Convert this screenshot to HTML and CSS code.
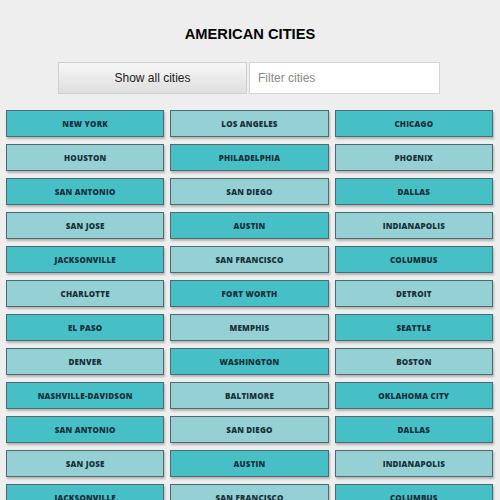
FILE: index.html
```html
<!DOCTYPE html>
<html>
<head>
<meta charset="utf-8">
<link rel="stylesheet" href="styles.css">
</head>
<body>
<div class="page">
  <h1 class="title">AMERICAN CITIES</h1>
  <div class="controls">
    <button class="show-all">Show all cities</button>
    <input class="filter" type="text" placeholder="Filter cities">
  </div>
  <ul class="cities">
    <li class="city dark">NEW YORK</li>
    <li class="city light">LOS ANGELES</li>
    <li class="city dark">CHICAGO</li>
    <li class="city light">HOUSTON</li>
    <li class="city dark">PHILADELPHIA</li>
    <li class="city light">PHOENIX</li>
    <li class="city dark">SAN ANTONIO</li>
    <li class="city light">SAN DIEGO</li>
    <li class="city dark">DALLAS</li>
    <li class="city light">SAN JOSE</li>
    <li class="city dark">AUSTIN</li>
    <li class="city light">INDIANAPOLIS</li>
    <li class="city dark">JACKSONVILLE</li>
    <li class="city light">SAN FRANCISCO</li>
    <li class="city dark">COLUMBUS</li>
    <li class="city light">CHARLOTTE</li>
    <li class="city dark">FORT WORTH</li>
    <li class="city light">DETROIT</li>
    <li class="city dark">EL PASO</li>
    <li class="city light">MEMPHIS</li>
    <li class="city dark">SEATTLE</li>
    <li class="city light">DENVER</li>
    <li class="city dark">WASHINGTON</li>
    <li class="city light">BOSTON</li>
    <li class="city dark">NASHVILLE-DAVIDSON</li>
    <li class="city light">BALTIMORE</li>
    <li class="city dark">OKLAHOMA CITY</li>
    <li class="city dark">SAN ANTONIO</li>
    <li class="city light">SAN DIEGO</li>
    <li class="city dark">DALLAS</li>
    <li class="city light">SAN JOSE</li>
    <li class="city dark">AUSTIN</li>
    <li class="city light">INDIANAPOLIS</li>
    <li class="city dark">JACKSONVILLE</li>
    <li class="city light">SAN FRANCISCO</li>
    <li class="city dark">COLUMBUS</li>
  </ul>
</div>
</body>
</html>
```
FILE: styles.css
```css
html, body {
  margin: 0;
  padding: 0;
  background: #eeeeee;
}

.page {
  font-family: "Liberation Sans", Arial, sans-serif;
}

.title {
  margin: 0;
  padding-top: 26px;
  font-size: 14.7px;
  line-height: 16px;
  font-weight: bold;
  text-align: center;
  color: #000;
}

.controls {
  display: flex;
  justify-content: center;
  margin-top: 20px;
  gap: 2px;
  padding-right: 2px;
}

.show-all {
  box-sizing: border-box;
  width: 189px;
  height: 32px;
  margin: 0;
  border: 1px solid #cfcfcf;
  background: linear-gradient(#f7f7f7, #dedede);
  font-family: "Liberation Sans", Arial, sans-serif;
  font-size: 12px;
  color: #222;
  padding: 0;
}

.filter {
  box-sizing: border-box;
  width: 191px;
  height: 32px;
  margin: 0;
  border: 1px solid #d6d6d6;
  background: #fff;
  padding: 0 8px;
  font-family: "Liberation Sans", Arial, sans-serif;
  font-size: 12px;
  outline: none;
}

.filter::placeholder {
  color: #8a8a8a;
}

.cities {
  list-style: none;
  margin: 16px 0 0;
  padding: 0 7px 0 6px;
  display: grid;
  grid-template-columns: repeat(3, 1fr);
  column-gap: 6px;
  row-gap: 7px;
}

.city {
  box-sizing: border-box;
  height: 27px;
  border: 1px solid #4d6a6e;
  box-shadow: 1px 2px 2px rgba(0, 0, 0, 0.25);
  display: flex;
  align-items: center;
  justify-content: center;
  font-family: "Open Sans", sans-serif;
  font-weight: 800;
  font-size: 8px;
  letter-spacing: 0.2px;
  color: #15303a;
}

.dark {
  background: #46bfc7;
}

.light {
  background: #95d0d4;
}
```
